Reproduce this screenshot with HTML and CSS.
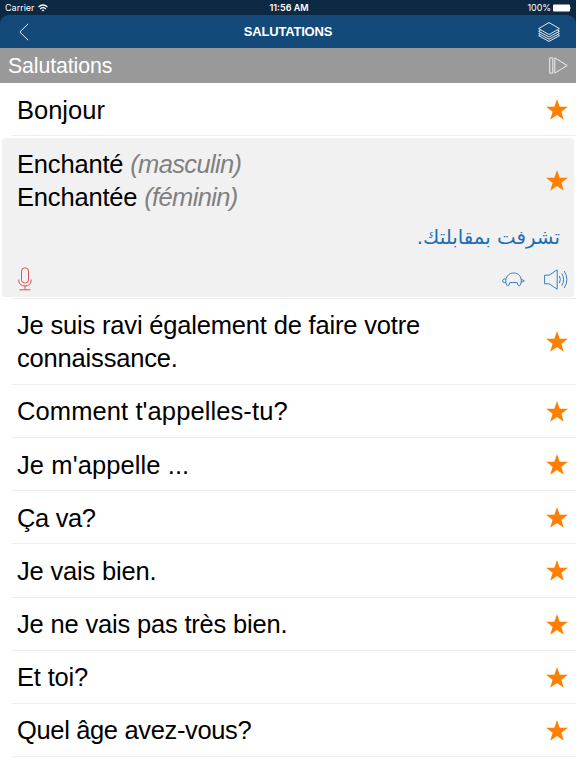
FILE: index.html
```html
<!DOCTYPE html>
<html lang="fr">
    <head>
        <meta charset="utf-8">
        <title>Salutations</title>
        <link rel="stylesheet" href="styles.css">
    </head>
    <body>
        <svg class="defs" width="0" height="0">
            <symbol id="star" viewBox="0 0 22 21">
                <path d="M11 0L13.7 7.8H22L15.4 12.8L17.8 20.7L11 16L4.2 20.7L6.6 12.8L0 7.8H8.3Z"/>
            </symbol>
        </svg>

        <div class="top">
            <div class="status">
                <div class="carrier">
                    <span>Carrier</span>
                    <svg width="10" height="8" viewBox="0 0 10 8" fill="none" stroke="#fff" stroke-width="1.3">
                        <path d="M0.5 3Q5 -1 9.5 3M2.2 4.9Q5 2.4 7.8 4.9"/>
                        <path d="M3.6 6L5 7.6L6.4 6Q5 5 3.6 6Z" fill="#fff" stroke="none"/>
                    </svg>
                </div>
                <div class="time">11:56 AM</div>
                <div class="battery">
                    <span>100%</span>
                    <svg width="19" height="8" viewBox="0 0 19 8" fill="#fff">
                        <rect x="0" y="0.5" width="17" height="7" rx="1"/>
                        <path d="M17.6 2.6Q18.8 4 17.6 5.4Z"/>
                    </svg>
                </div>
            </div>
            <div class="nav">
                <svg class="back" width="10" height="18" viewBox="0 0 10 18">
                    <path d="M9.2 0.8L0.8 9L9.2 17.2"/>
                </svg>
                <h1>SALUTATIONS</h1>
                <svg class="layers" width="22" height="20" viewBox="0 0 22 20">
                    <path d="M11 0.6L21.4 6.6L11 12.6L0.6 6.6Z"/>
                    <path d="M2.6 8L0.6 9.2L11 15L21.4 9.2L19.4 8"/>
                    <path d="M2.6 10.4L0.6 11.6L11 17.2L21.4 11.6L19.4 10.4"/>
                    <path d="M2.6 12.5L0.6 13.7L11 19.4L21.4 13.7L19.4 12.5"/>
                </svg>
            </div>
        </div>

        <div class="section">
            <h2>Salutations</h2>
            <svg width="19" height="17" viewBox="0 0 19 17">
                <path d="M0.7 0.9H3.8V16.1H0.7ZM5.8 0.9L18.2 8.5L5.8 16.1Z"/>
            </svg>
        </div>

        <div class="list">
            <div class="row">
                <p>Bonjour</p>
                <svg class="star"><use href="#star"/></svg>
            </div>
            <div class="row open">
                <div class="card">
                    <div class="phrase">
                        <p>Enchanté <i>(masculin)</i><br>Enchantée <i>(féminin)</i></p>
                        <svg class="star"><use href="#star"/></svg>
                    </div>
                    <div class="translation" lang="ar" dir="rtl"><span>تشرفت بمقابلتك.</span></div>
                    <div class="tools">
                        <svg class="mic" width="14" height="24" viewBox="0 0 14 24">
                            <rect x="3.5" y="0.9" width="7" height="15.1" rx="3.2"/>
                            <path d="M0.8 12.5V14Q1.5 18.9 7 18.9T13.2 14V12.5M7 19V22.6M1.5 22.8H12.5"/>
                        </svg>
                        <svg class="turtle" width="23" height="15" viewBox="0 0 23 15">
                            <path d="M3.8 10.6V8C4.6 3.6 7.6 1 11.7 1S18.6 3.6 19.2 7.4V10.6"/>
                            <path d="M3.8 7H2.2Q0.7 7.3 0.7 9T2.4 10.6H4M7.7 10.6H15.3M19 10.6L22.3 8.8L19.2 7.2"/>
                            <path d="M4 10.6Q4 13.8 5.8 13.8T7.7 10.6M15.3 10.6Q15.6 13.8 17.2 13.8T19 10.6"/>
                        </svg>
                        <svg class="speaker" width="24" height="21" viewBox="0 0 24 21">
                            <path d="M0.6 6.2H5.2L13.2 0.8V20.2L5.2 14.8H0.6Z"/>
                            <path d="M15.4 7Q17.4 10.5 15.4 14M17.8 4.4Q21.4 10.5 17.8 16.6M20.2 2Q25.6 10.5 20.2 19"/>
                        </svg>
                    </div>
                </div>
            </div>
            <div class="row">
                <p>Je suis ravi également de faire votre<br>connaissance.</p>
                <svg class="star"><use href="#star"/></svg>
            </div>
            <div class="row">
                <p class="wide">Comment t'appelles-tu?</p>
                <svg class="star"><use href="#star"/></svg>
            </div>
            <div class="row">
                <p class="wide">Je m'appelle ...</p>
                <svg class="star"><use href="#star"/></svg>
            </div>
            <div class="row">
                <p class="tight">Ça va?</p>
                <svg class="star"><use href="#star"/></svg>
            </div>
            <div class="row">
                <p>Je vais bien.</p>
                <svg class="star"><use href="#star"/></svg>
            </div>
            <div class="row">
                <p>Je ne vais pas très bien.</p>
                <svg class="star"><use href="#star"/></svg>
            </div>
            <div class="row">
                <p>Et toi?</p>
                <svg class="star"><use href="#star"/></svg>
            </div>
            <div class="row">
                <p class="tight">Quel âge avez-vous?</p>
                <svg class="star"><use href="#star"/></svg>
            </div>
        </div>
    </body>
</html>
```

FILE: styles.css
```css
* {
    box-sizing: border-box;
}

body {
    margin: 0;
    height: 768px;
    overflow: hidden;
    background-color: #fff;
    color: #000;
    font-family: "Liberation Sans", Arial, sans-serif;
}

h1, h2, p {
    margin: 0;
    font-weight: normal;
}

svg {
    display: block;
    flex: none;
}

.defs {
    display: none;
}

/* Status bar and navigation bar */
.top {
    background-color: #0c2943;
    color: #fff;
}

.status {
    display: grid;
    grid-template-columns: 1fr auto 1fr;
    align-items: center;
    height: 15px;
    padding: 1px 4px 0 5px;
    font-family: Inter, sans-serif;
    font-size: 9px;
    line-height: 14px;
}

.carrier, .battery {
    display: flex;
    align-items: center;
    gap: 3px;
}

.battery {
    justify-content: flex-end;
    gap: 2px;
    letter-spacing: -0.1px;
}

.time {
    padding-left: 1px;
    font-weight: 600;
}

.nav {
    display: grid;
    grid-template-columns: 1fr auto 1fr;
    align-items: center;
    height: 33px;
    padding: 0 16px 0 19px;
    border-radius: 9px 9px 0 0;
    background-color: #134a79;
}

.nav svg {
    fill: none;
    stroke: #e3eaf0;
    stroke-width: 1;
}

.nav h1 {
    margin-left: -3px;
    font-size: 13px;
    font-weight: bold;
    letter-spacing: -0.2px;
}

.layers {
    justify-self: end;
}

/* Section title */
.section {
    display: flex;
    align-items: center;
    justify-content: space-between;
    height: 35px;
    padding: 0 8px;
    background-color: #999;
    color: #fff;
}

.section h2 {
    padding-top: 2px;
    font-size: 21.3px;
    letter-spacing: -0.1px;
}

.section svg {
    fill: none;
    stroke: #eee;
    stroke-width: 1;
}

/* Phrases */
.row {
    display: flex;
    align-items: center;
    justify-content: space-between;
    min-height: 53.2px;
    margin-left: 12px;
    padding: 10.6px 8px 8.6px 5px;
    border-bottom: 1px solid #ececec;
    font-size: 25.5px;
    line-height: 33px;
    letter-spacing: -0.18px;
}

.row:first-child {
    letter-spacing: 0;
}

.wide {
    letter-spacing: 0.1px;
}

.tight {
    letter-spacing: -0.35px;
}

.star {
    width: 22px;
    height: 21px;
    margin-bottom: 1px;
    fill: #ff8000;
}

.row.open {
    padding: 2px 2px 1px 0;
}

.card {
    flex: 1;
    height: 158.4px;
    margin-left: -10px;
    padding: 10px 6px 0 15px;
    border-radius: 4px;
    background-color: #f1f1f1;
}

.phrase {
    display: flex;
    align-items: center;
    justify-content: space-between;
}

.phrase .star {
    margin-bottom: 2px;
}

.phrase i {
    color: #808080;
    letter-spacing: -0.65px;
}

.translation {
    height: 48px;
    padding: 7px 8px 0 0;
    color: #1a6fb5;
    font-family: "DejaVu Sans", sans-serif;
    font-size: 19.8px;
    letter-spacing: 0;
}

.tools {
    display: flex;
    align-items: center;
    height: 34px;
    fill: none;
    stroke: #3a80bd;
    stroke-width: 1;
}

.mic {
    margin-left: 1px;
    margin-right: auto;
    stroke: #e2504f;
}

.speaker {
    margin-left: 19px;
}
```
